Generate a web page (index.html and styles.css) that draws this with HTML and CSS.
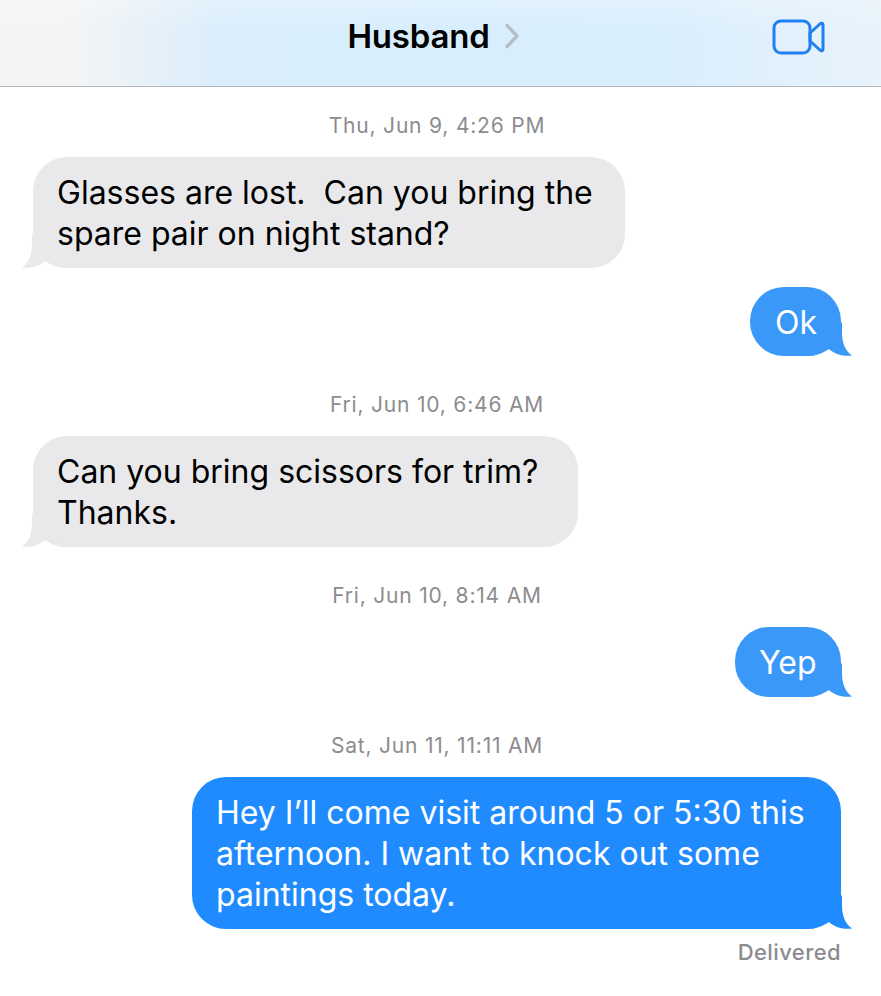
FILE: index.html
```html
<!DOCTYPE html>
<html lang="en">
<head>
    <meta charset="UTF-8">
    <meta name="viewport" content="width=device-width, initial-scale=1.0">
    <title>Husband</title>
    <link rel="stylesheet" href="styles.css">
</head>
<body>
    <header class="nav">
        <div class="nav-title">
            <span class="nav-name">Husband</span>
            <svg class="nav-chevron" width="16" height="26" viewBox="0 0 16 26">
                <path d="M3 2.5 L13 13 L3 23.5" fill="none" stroke="#b4bec7" stroke-width="3.4" stroke-linecap="round" stroke-linejoin="round"/>
            </svg>
        </div>
        <svg class="nav-video" width="54" height="36" viewBox="0 0 54 36">
            <rect x="2" y="2" width="36" height="32" rx="7" fill="none" stroke="#2080f0" stroke-width="3"/>
            <path d="M38 14 L48.5 4.5 Q51 3.5 51 6 L51 30 Q51 32.5 48.5 31.5 L38 22 Z" fill="none" stroke="#2080f0" stroke-width="3" stroke-linejoin="round"/>
        </svg>
    </header>

    <main class="thread">
        <div class="stamp">Thu, Jun 9, 4:26 PM</div>
        <div class="bubble in w-glasses">
            Glasses are lost.&nbsp; Can you bring the<br>spare pair on night stand?
            <svg class="tail" width="46" height="34" viewBox="0 0 46 34"><path d="M35 0 L35 10 C35 20 38 29 45 33.5 C38 34.5 28 33 22 27 C17 30.5 9 34 0 34 Z"/></svg>
        </div>

        <div class="bubble out light w-ok">
            Ok
            <svg class="tail" width="46" height="34" viewBox="0 0 46 34"><path d="M35 0 L35 10 C35 20 38 29 45 33.5 C38 34.5 28 33 22 27 C17 30.5 9 34 0 34 Z"/></svg>
        </div>

        <div class="stamp gap">Fri, Jun 10, 6:46 AM</div>
        <div class="bubble in w-scissors">
            Can you bring scissors for trim?<br>Thanks.
            <svg class="tail" width="46" height="34" viewBox="0 0 46 34"><path d="M35 0 L35 10 C35 20 38 29 45 33.5 C38 34.5 28 33 22 27 C17 30.5 9 34 0 34 Z"/></svg>
        </div>

        <div class="stamp gap">Fri, Jun 10, 8:14 AM</div>
        <div class="bubble out light w-yep">
            Yep
            <svg class="tail" width="46" height="34" viewBox="0 0 46 34"><path d="M35 0 L35 10 C35 20 38 29 45 33.5 C38 34.5 28 33 22 27 C17 30.5 9 34 0 34 Z"/></svg>
        </div>

        <div class="stamp gap">Sat, Jun 11, 11:11 AM</div>
        <div class="bubble out w-visit">
            Hey I’ll come visit around 5 or 5:30 this<br>afternoon. I want to knock out some<br>paintings today.
            <svg class="tail" width="46" height="34" viewBox="0 0 46 34"><path d="M35 0 L35 10 C35 20 38 29 45 33.5 C38 34.5 28 33 22 27 C17 30.5 9 34 0 34 Z"/></svg>
        </div>
        <div class="delivered">Delivered</div>
    </main>
</body>
</html>
```

FILE: styles.css
```css
body {
    margin: 0;
    background-color: #fff;
    font-family: Inter, "Liberation Sans", sans-serif;
    color: #000;
}

.nav {
    box-sizing: border-box;
    height: 87px;
    padding-bottom: 15px;
    border-bottom: 1px solid #b5b9bd;
    background:
        linear-gradient(180deg, rgba(255, 255, 255, 0.22), rgba(255, 255, 255, 0) 35%),
        linear-gradient(90deg, #f5f5f5 0%, #f3f4f5 9%, #e8f1f8 16%, #daeefc 25%, #d8eefd 50%, #d9eefd 75%, #e8f3fb 100%);
    display: flex;
    align-items: center;
    justify-content: center;
    position: relative;
}

.nav-title {
    display: flex;
    align-items: center;
    gap: 14px;
    margin-left: -14px;
}

.nav-name {
    font-size: 33px;
    font-weight: 600;
    letter-spacing: -0.2px;
}

.nav-video {
    position: absolute;
    left: 772px;
    top: 19px;
}

.thread {
    display: flex;
    flex-direction: column;
    padding: 26px 40px 0 33px;
}

.stamp {
    font-size: 21px;
    line-height: 24px;
    letter-spacing: 0.8px;
    color: #8c8c90;
    text-align: center;
    padding-top: 1px;
    margin-bottom: 19px;
}

.stamp.gap {
    margin-top: 36px;
}

.bubble {
    position: relative;
    box-sizing: border-box;
    padding: 15px 0 14px 24px;
    border-radius: 34px;
    font-size: 32px;
    line-height: 41px;
}

.bubble.in {
    align-self: flex-start;
    background-color: #e9e9eb;
}

.bubble.out {
    align-self: flex-end;
    background-color: #1f8bff;
    color: #fff;
}

.bubble.light {
    background-color: #3a99f8;
}

.tail {
    position: absolute;
    bottom: 0;
}

.in .tail {
    left: -12px;
    transform: scaleX(-1);
    fill: #e9e9eb;
}

.out .tail {
    right: -12px;
    fill: #1f8bff;
}

.light .tail {
    fill: #3a99f8;
}

.w-glasses { width: 592px; }
.w-scissors { width: 545px; }
.w-ok { width: 91px; height: 69px; margin-top: 19px; padding-left: 25px; }
.w-yep { width: 106px; }
.w-visit { width: 649px; }

.delivered {
    align-self: flex-end;
    margin-top: 11px;
    font-size: 22px;
    line-height: 24px;
    font-weight: 500;
    letter-spacing: 0.4px;
    color: #8c8c90;
}
```
